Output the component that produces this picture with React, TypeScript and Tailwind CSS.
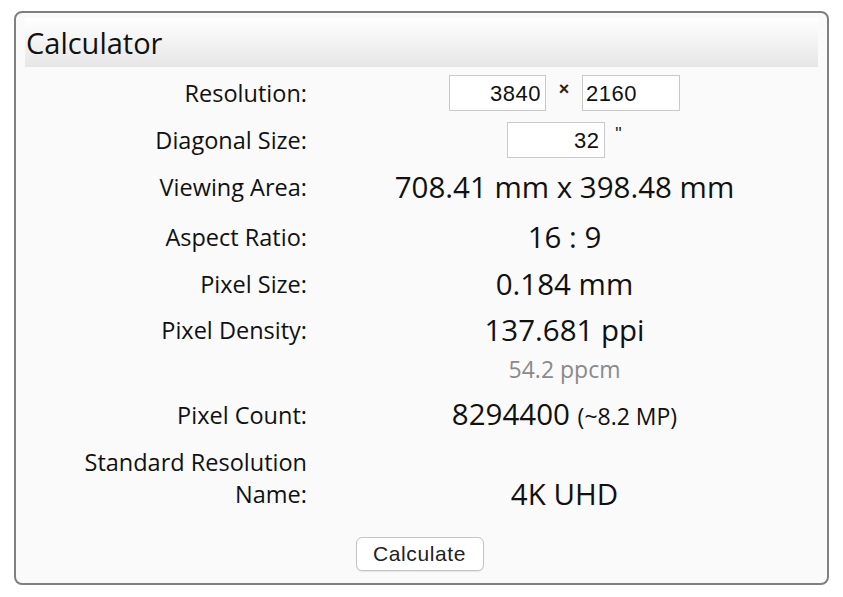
import React from 'react';

function Label({ children }: { children: React.ReactNode }) {
  return <div className="text-right text-[23.5px] leading-[32px] text-[#111]">{children}</div>;
}

function Value({ children }: { children: React.ReactNode }) {
  return <div className="text-center text-[29.5px] leading-[36px] text-[#111]">{children}</div>;
}

export default function App() {
  return (
    <div className="w-[843px] h-[597px] bg-white pt-[11px] pl-[14px]" style={{ fontFamily: '"Open Sans", sans-serif' }}>
      <div className="w-[815px] h-[574px] rounded-[8px] border-2 border-[#808080] bg-[#fafafa] px-[9px] pt-[5px]">
        {/* Header */}
        <div className="h-[49px] bg-gradient-to-b from-white to-[#e6e6e6] pl-[1px] flex items-center">
          <span className="text-[29px] font-medium text-[#111]">Calculator</span>
        </div>

        <div className="grid grid-cols-[282px_1fr] gap-x-[4px] mt-[3px]">
          {/* Resolution */}
          <div className="h-[46px] flex items-center justify-end"><Label>Resolution:</Label></div>
          <div className="h-[46px] flex items-center justify-center" style={{ fontFamily: '"Liberation Sans", Arial, sans-serif' }}>
            <div className="w-[97px] h-[36px] border border-[#c9c9c9] bg-white flex items-center justify-end pr-[4px] text-[22px] tracking-[0.5px] text-[#111]">3840</div>
            <span className="w-[36px] text-center text-[18px] font-bold text-[#222] -mt-[8px]">×</span>
            <div className="w-[98px] h-[36px] border border-[#c9c9c9] bg-white flex items-center pl-[3px] text-[22px] tracking-[0.5px] text-[#111]">2160</div>
          </div>

          {/* Diagonal */}
          <div className="h-[48px] flex items-center justify-end"><Label>Diagonal Size:</Label></div>
          <div className="h-[48px] flex items-center justify-center pl-[10px]" style={{ fontFamily: '"Liberation Sans", Arial, sans-serif' }}>
            <div className="w-[98px] h-[36px] border border-[#c9c9c9] bg-white flex items-center justify-end pr-[4px] text-[22px] tracking-[0.5px] text-[#111]">32</div>
            <span className="w-[28px] text-center text-[18px] text-[#222] -mt-[12px]">"</span>
          </div>

          <div className="h-[46px] flex items-center justify-end"><Label>Viewing Area:</Label></div>
          <div className="h-[46px] flex items-center justify-center"><Value>708.41 mm x 398.48 mm</Value></div>

          <div className="h-[54px] flex items-center justify-end"><Label>Aspect Ratio:</Label></div>
          <div className="h-[54px] flex items-center justify-center"><Value>16 : 9</Value></div>

          <div className="h-[40px] flex items-center justify-end"><Label>Pixel Size:</Label></div>
          <div className="h-[40px] flex items-center justify-center"><Value>0.184 mm</Value></div>

          {/* Density */}
          <div className="h-[88px] pt-[10px]"><Label>Pixel Density:</Label></div>
          <div className="h-[88px] flex flex-col items-center pt-[8px]">
            <Value>137.681 ppi</Value>
            <div className="text-[23px] leading-[28px] text-[#8a8a8a] mt-[7px]">54.2 ppcm</div>
          </div>

          <div className="h-[46px] flex items-center justify-end"><Label>Pixel Count:</Label></div>
          <div className="h-[46px] flex items-center justify-center">
            <Value>
              8294400 <span className="text-[23px]">(~8.2 MP)</span>
            </Value>
          </div>

          {/* Standard name */}
          <div className="h-[80px] pt-[8px]">
            <Label>
              Standard Resolution
              <br />
              Name:
            </Label>
          </div>
          <div className="h-[80px] pt-[38px]"><Value>4K UHD</Value></div>
        </div>

        <div className="flex justify-center mt-[19px] pr-[4px]">
          <button
            className="w-[128px] h-[34px] rounded-[6px] border border-[#c4c4c4] bg-white text-[21px] tracking-[0.6px] text-[#222] shadow-[0_1px_1px_rgba(0,0,0,0.08)]"
            style={{ fontFamily: '"Liberation Sans", Arial, sans-serif' }}
          >
            Calculate
          </button>
        </div>
      </div>
    </div>
  );
}
